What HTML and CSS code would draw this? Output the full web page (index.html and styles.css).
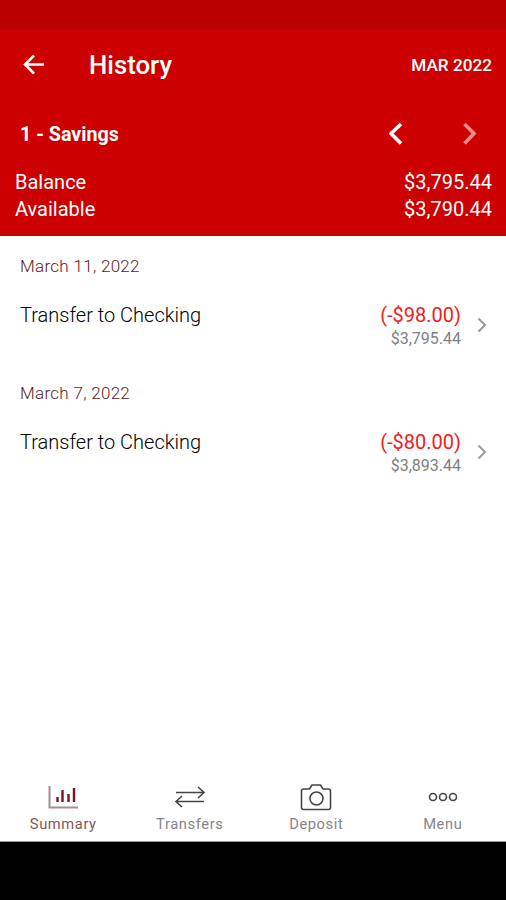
FILE: index.html
```html
<!DOCTYPE html>
<html lang="en">
<head>
  <meta charset="UTF-8" />
  <meta name="viewport" content="width=device-width, initial-scale=1.0" />
  <title>History</title>
  <link rel="stylesheet" href="styles.css">
</head>
<body>
  <div class="status-bar"></div>

  <header class="header">
    <div class="app-bar">
      <svg class="back" width="22" height="20" viewBox="0 0 22 20"><path d="M21 9.500H2M11 .5L2 9.500l9 9" /></svg>
      <h1>History</h1>
      <span class="month">MAR 2022</span>
    </div>
    <div class="account">
      <span class="account-name">1 - Savings</span>
      <svg class="prev" width="14" height="24" viewBox="0 0 14 24"><path d="M12 2L2 11.500l10 10" /></svg>
      <svg class="next" width="14" height="24" viewBox="0 0 14 24"><path d="M1.500 2l9.500 9.500-9.500 10" /></svg>
    </div>
    <div class="balance"><span>Balance</span><span>$3,795.44</span></div>
    <div class="balance"><span>Available</span><span>$3,790.44</span></div>
  </header>

  <main class="history">
    <h2>March 11, 2022</h2>
    <div class="transaction">
      <span class="description">Transfer to Checking</span>
      <div class="amounts">
        <span class="amount">(-$98.00)</span>
        <span class="running">$3,795.44</span>
      </div>
      <svg class="chevron" width="10" height="16" viewBox="0 0 10 16"><path d="M1.500 1.500L8 8l-6.500 6.500" /></svg>
    </div>
    <h2>March 7, 2022</h2>
    <div class="transaction">
      <span class="description">Transfer to Checking</span>
      <div class="amounts">
        <span class="amount">(-$80.00)</span>
        <span class="running">$3,893.44</span>
      </div>
      <svg class="chevron" width="10" height="16" viewBox="0 0 10 16"><path d="M1.500 1.500L8 8l-6.500 6.500" /></svg>
    </div>
  </main>

  <nav class="tabs">
    <a class="tab active">
      <svg width="32" height="28" viewBox="0 0 32 28">
        <path class="axis" d="M2.500 3v21.500H31" />
        <path class="bars" d="M10.500 14v5M15.500 7v12M21.500 11v8M27 5v14" />
      </svg>
      <span>Summary</span>
    </a>
    <a class="tab">
      <svg width="32" height="28" viewBox="0 0 32 28">
        <path d="M2 9.500h28M24 4l6 5.500-6 5.500M30 18.500H2M8 13l-6 5.500L8 24" />
      </svg>
      <span>Transfers</span>
    </a>
    <a class="tab">
      <svg width="32" height="28" viewBox="0 0 32 28">
        <path d="M3.500 6H9.500L12 2h8.500L23 6h5.500q2 0 2 2v16.500q0 2-2 2h-25q-2 0-2-2V8q0-2 2-2z" />
        <circle cx="16.500" cy="15.500" r="6.500" />
      </svg>
      <span>Deposit</span>
    </a>
    <a class="tab">
      <svg width="32" height="28" viewBox="0 0 32 28">
        <circle cx="6" cy="14" r="3.500" />
        <circle cx="16" cy="14" r="3.500" />
        <circle cx="26" cy="14" r="3.500" />
      </svg>
      <span>Menu</span>
    </a>
  </nav>
  <div class="system-bar"></div>
</body>
</html>
```

FILE: styles.css
```css
* {
  box-sizing: border-box;
}
body {
  font-family: Roboto, sans-serif;
  margin: 0;
  height: 100vh;
  display: flex;
  flex-direction: column;
  background: #fff;
  overflow: hidden;
}
h1, h2 {
  margin: 0;
}
svg {
  display: block;
  fill: none;
  flex-shrink: 0;
}
.status-bar {
  height: 29px;
  background: #b90000;
}
.header {
  height: 207px;
  background: #cc0000;
  color: #fff;
}
.header svg {
  stroke: #fff;
}
.app-bar {
  display: flex;
  align-items: center;
  height: 72px;
  padding: 0 14px 0 23px;
}
.back {
  stroke-width: 2.6;
}
.app-bar h1 {
  margin-left: 44px;
  font-size: 25.8px;
  font-weight: 500;
}
.month {
  margin-left: auto;
  font-size: 17.2px;
  font-weight: 500;
}
.account {
  display: flex;
  align-items: center;
  height: 66px;
  margin-bottom: 2px;
  padding: 0 29px 0 20px;
}
.account-name {
  flex: 1;
  font-size: 19.7px;
  font-weight: 700;
}
.account svg {
  stroke-width: 3.6;
}
.account .next {
  margin-left: 60px;
  stroke: #ee8a8a;
}
.balance {
  display: flex;
  justify-content: space-between;
  padding: 0 14px 0 15px;
  font-size: 20px;
  line-height: 27px;
}
.history {
  flex: 1;
}
.history h2 {
  padding: 17px 20px 0;
  color: #5c1a25;
  font-size: 17px;
  font-weight: 300;
  letter-spacing: 0.3px;
  line-height: 27px;
}
.transaction {
  display: flex;
  align-items: center;
  height: 83px;
  padding: 6px 19px 0 20px;
}
.description {
  flex: 1;
  padding-bottom: 20px;
  font-size: 20px;
  font-weight: 300;
}
.amounts {
  display: flex;
  flex-direction: column;
  align-items: flex-end;
  padding-top: 4px;
}
.amount {
  color: #f02020;
  font-size: 20px;
  line-height: 24px;
}
.running {
  color: #808080;
  font-size: 16px;
  line-height: 24px;
}
.chevron {
  margin-left: 16px;
  stroke: #999;
  stroke-width: 2;
}
.tabs {
  display: flex;
  height: 72px;
  border-bottom: 1px solid #999;
}
.tab {
  flex: 1;
  display: flex;
  flex-direction: column;
  align-items: center;
  padding-top: 13px;
  color: #858585;
  font-size: 14.7px;
  line-height: 26px;
  letter-spacing: 0.6px;
}
.tab svg {
  stroke: #444;
  stroke-width: 1.6;
}
.tab.active {
  color: #86535a;
}
.tab.active .axis {
  stroke: #a98e90;
  stroke-width: 2;
}
.tab.active .bars {
  stroke: #7a1620;
  stroke-width: 2.4;
}
.system-bar {
  height: 58px;
  background: #000;
}
```
